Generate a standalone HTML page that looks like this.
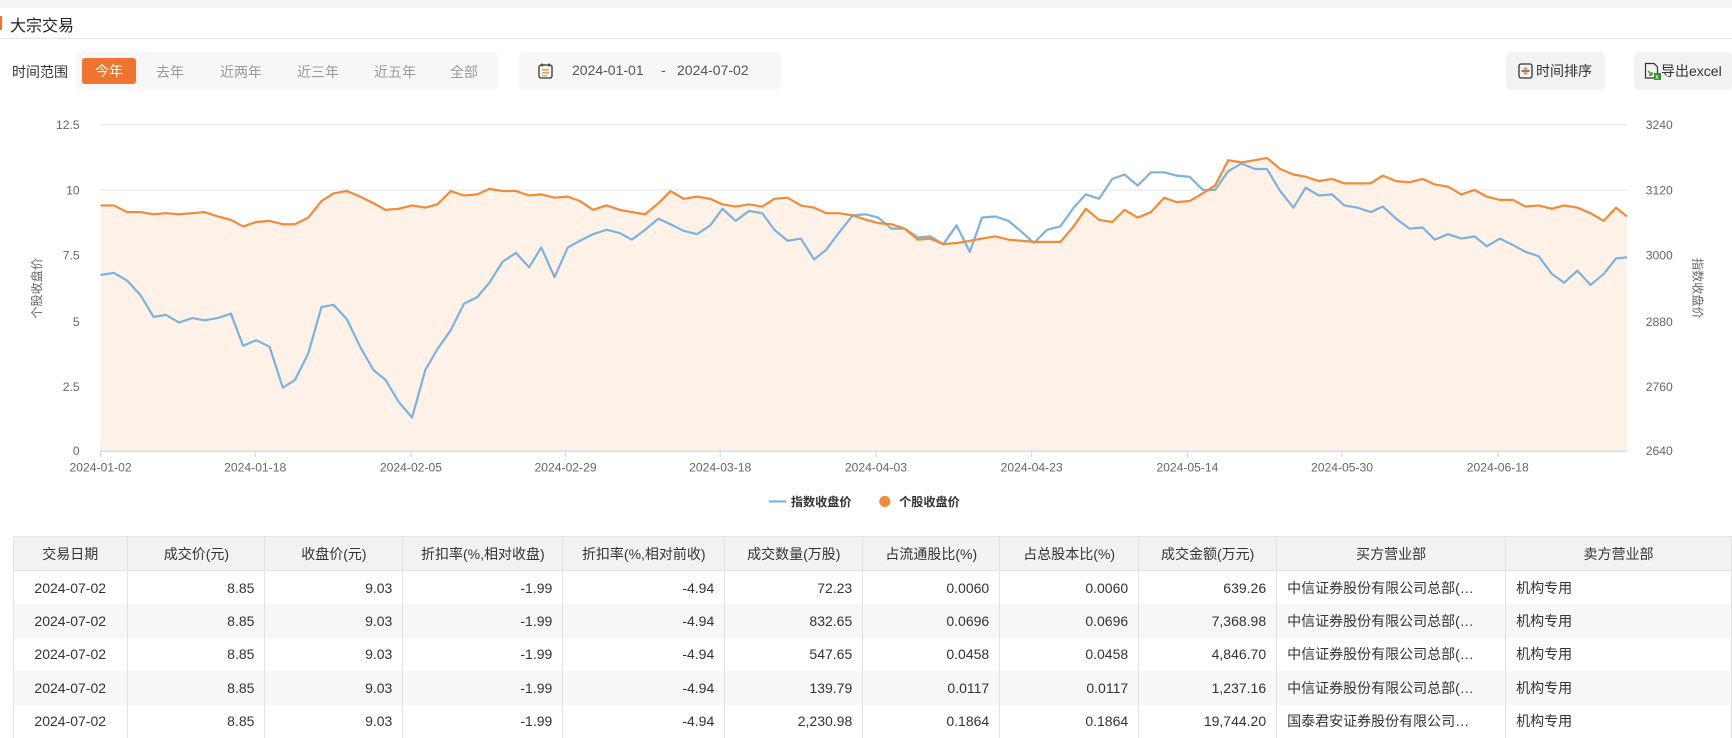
<!DOCTYPE html>
<html><head><meta charset="utf-8">
<style>
*{margin:0;padding:0;box-sizing:border-box}
body{width:1732px;height:738px;overflow:hidden;background:#fff;font-family:"Liberation Sans","Noto Sans CJK SC",sans-serif;color:#333;position:relative}
.topbg{position:absolute;left:0;top:0;width:1732px;height:8px;background:#f5f5f5}
.title{position:absolute;left:10px;top:12px;font-size:16px;color:#222}
.obar{position:absolute;left:0;top:16px;width:2px;height:14px;background:#ef7430}
.div{position:absolute;left:0;top:38px;width:1732px;height:1px;background:#e4e4e4}
.lbl{position:absolute;left:12px;top:62px;font-size:14px;color:#333}
.fbox{position:absolute;left:76px;top:52px;width:422px;height:38px;background:#f7f7f7;border-radius:5px}
.act{position:absolute;left:82px;top:58px;width:54px;height:26px;background:#ef7430;border-radius:3px;color:#fff;font-size:14px;text-align:center;line-height:26px}
.opt{position:absolute;top:62px;font-size:14px;color:#999;transform:translateX(-50%)}
.dbox{position:absolute;left:519px;top:52px;width:262px;height:38px;background:#f7f7f7;border-radius:5px}
.dt{position:absolute;top:62px;font-size:14px;color:#555}
.btn{position:absolute;top:52px;height:38px;background:#f2f2f2;border-radius:5px;font-size:14px;color:#333;line-height:38px}
svg.chart{position:absolute;left:0;top:0}
table{position:absolute;left:13px;top:536px;border-collapse:collapse;font-size:14px;color:#333;table-layout:fixed}
td,th{border-right:1px solid #e2e2e2;height:33.5px;padding:0 10px;white-space:nowrap;overflow:hidden}
th{background:#f2f2f2;font-weight:normal;text-align:center;height:34px;border-bottom:1px solid #e2e2e2;border-top:1px solid #e2e2e2}
tr.alt td{background:#f7f7f7}
td.c{text-align:center}td.r{text-align:right}td.l{text-align:left}
</style></head><body>
<div class="topbg"></div>
<div class="obar"></div>
<div class="title">大宗交易</div>
<div class="div"></div>
<div class="lbl">时间范围</div>
<div class="fbox"></div>
<div class="act">今年</div>
<div class="opt" style="left:170px">去年</div>
<div class="opt" style="left:241px">近两年</div>
<div class="opt" style="left:318px">近三年</div>
<div class="opt" style="left:395px">近五年</div>
<div class="opt" style="left:464px">全部</div>
<div class="dbox"></div>
<svg style="position:absolute;left:538px;top:63px" width="15" height="16" viewBox="0 0 15 16"><rect x="1" y="2" width="13" height="13" rx="2" fill="none" stroke="#333" stroke-width="1.3"/><line x1="4" y1="0.5" x2="4" y2="3.5" stroke="#333" stroke-width="1.3"/><line x1="11" y1="0.5" x2="11" y2="3.5" stroke="#333" stroke-width="1.3"/><rect x="4" y="6" width="7" height="1.6" fill="#f0a060"/><rect x="4" y="9" width="7" height="1.6" fill="#f0a060"/><rect x="4" y="12" width="5" height="1.4" fill="#f0a060"/></svg>
<div class="dt" style="left:572px">2024-01-01</div>
<div class="dt" style="left:661px">-</div>
<div class="dt" style="left:677px">2024-07-02</div>
<div class="btn" style="left:1506px;width:99px;padding-left:30px">时间排序</div>
<svg style="position:absolute;left:1518px;top:63px" width="15" height="16" viewBox="0 0 15 16"><rect x="1" y="1" width="13" height="14" rx="2" fill="none" stroke="#333" stroke-width="1.3"/><line x1="3.5" y1="8" x2="11.5" y2="8" stroke="#333" stroke-width="1.2"/><path d="M5 6.5 L7.5 4 L10 6.5Z" fill="#ef7430"/><path d="M5 9.5 L7.5 12 L10 9.5Z" fill="#ef7430"/></svg>
<div class="btn" style="left:1634px;width:98px;padding-left:27px">导出excel</div>
<svg style="position:absolute;left:1644px;top:62px" width="18" height="18" viewBox="0 0 18 18"><path d="M1.5 1.5 H10 L13.5 5 V16 H1.5Z" fill="none" stroke="#333" stroke-width="1.2"/><path d="M4 9 L8 13 M8 13 V10 M8 13 H5" stroke="#4a9a3a" stroke-width="1.5" fill="none"/><rect x="10" y="11" width="7" height="7" fill="#3c8f35"/><text x="11.3" y="17" font-size="7" fill="#fff" font-family="Liberation Sans">x</text></svg>

<svg class="chart" width="1732" height="520" viewBox="0 0 1568 470.8">
<g stroke="#e6e6e6" stroke-width="1">
<line x1="91" y1="113" x2="1473" y2="113"/><line x1="91" y1="172" x2="1473" y2="172"/><line x1="91" y1="231" x2="1473" y2="231"/><line x1="91" y1="291" x2="1473" y2="291"/><line x1="91" y1="350" x2="1473" y2="350"/>
</g>
<polygon fill="#fdf1e8" points="91,408 91,186 103,186 115,192 127,192 139,194 150,193 162,194 174,193 185,192 197,196 209,199 220,205 232,201 244,200 256,203 267,203 279,197 291,182 302,175 314,173 326,178 338,184 349,190 361,189 373,186 385,188 396,185 408,173 420,177 432,176 443,171 455,173 467,173 479,177 490,176 502,179 514,178 525,182 537,190 549,186 561,190 572,192 584,194 596,184 607,173 619,180 631,178 643,180 654,185 666,187 678,185 690,187 701,180 713,179 725,186 737,188 748,193 760,193 772,195 784,199 795,202 807,203 819,207 831,217 842,216 854,221 866,220 878,218 889,216 901,214 913,217 925,218 936,219 948,219 960,219 972,205 983,189 995,199 1007,201 1018,190 1030,197 1042,192 1054,179 1065,183 1077,182 1089,175 1100,168 1112,145 1124,147 1136,145 1147,143 1159,153 1171,158 1182,160 1194,164 1206,162 1217,166 1229,166 1241,166 1252,159 1264,164 1276,165 1288,162 1299,167 1311,169 1323,176 1335,172 1346,178 1358,181 1370,181 1381,187 1393,186 1405,189 1416,186 1428,188 1440,193 1452,200 1463,188 1473,196 1473,408"/>
<polyline fill="none" stroke="#7eb2dd" stroke-width="2" stroke-linejoin="round" points="91,249 103,247 115,254 127,267 139,287 150,285 162,292 174,288 185,290 197,288 209,284 220,313 232,308 244,314 256,351 267,344 279,320 291,278 302,276 314,289 326,314 338,335 349,344 361,364 373,378 385,335 396,316 408,299 420,275 432,269 443,256 455,237 467,229 479,242 490,224 502,251 514,224 525,218 537,212 549,208 561,211 572,217 584,208 596,198 607,203 619,209 631,212 643,204 654,189 666,200 678,191 690,193 701,208 713,218 725,216 737,235 748,226 760,210 772,195 784,194 795,197 807,207 819,207 831,215 842,214 854,221 866,204 878,228 889,197 901,196 913,200 925,210 936,220 948,208 960,205 972,188 983,176 995,180 1007,162 1018,158 1030,168 1042,156 1054,156 1065,159 1077,160 1089,172 1100,172 1112,155 1124,148 1136,153 1147,153 1159,173 1171,188 1182,170 1194,177 1206,176 1217,186 1229,188 1241,192 1252,187 1264,198 1276,207 1288,206 1299,217 1311,212 1323,216 1335,214 1346,223 1358,216 1370,222 1381,228 1393,232 1405,248 1416,256 1428,245 1440,258 1452,248 1463,234 1473,233"/>
<polyline fill="none" stroke="#ef8c3b" stroke-width="2" stroke-linejoin="round" points="91,186 103,186 115,192 127,192 139,194 150,193 162,194 174,193 185,192 197,196 209,199 220,205 232,201 244,200 256,203 267,203 279,197 291,182 302,175 314,173 326,178 338,184 349,190 361,189 373,186 385,188 396,185 408,173 420,177 432,176 443,171 455,173 467,173 479,177 490,176 502,179 514,178 525,182 537,190 549,186 561,190 572,192 584,194 596,184 607,173 619,180 631,178 643,180 654,185 666,187 678,185 690,187 701,180 713,179 725,186 737,188 748,193 760,193 772,195 784,199 795,202 807,203 819,207 831,217 842,216 854,221 866,220 878,218 889,216 901,214 913,217 925,218 936,219 948,219 960,219 972,205 983,189 995,199 1007,201 1018,190 1030,197 1042,192 1054,179 1065,183 1077,182 1089,175 1100,168 1112,145 1124,147 1136,145 1147,143 1159,153 1171,158 1182,160 1194,164 1206,162 1217,166 1229,166 1241,166 1252,159 1264,164 1276,165 1288,162 1299,167 1311,169 1323,176 1335,172 1346,178 1358,181 1370,181 1381,187 1393,186 1405,189 1416,186 1428,188 1440,193 1452,200 1463,188 1473,196"/>
<line x1="90" y1="408.5" x2="1473" y2="408.5" stroke="#ccd6eb" stroke-width="1"/>
<g stroke="#ccd6eb"><line x1="91" y1="408" x2="91" y2="414"/><line x1="231" y1="408" x2="231" y2="414"/><line x1="372" y1="408" x2="372" y2="414"/><line x1="512" y1="408" x2="512" y2="414"/><line x1="652" y1="408" x2="652" y2="414"/><line x1="793" y1="408" x2="793" y2="414"/><line x1="934" y1="408" x2="934" y2="414"/><line x1="1075" y1="408" x2="1075" y2="414"/><line x1="1215" y1="408" x2="1215" y2="414"/><line x1="1356" y1="408" x2="1356" y2="414"/></g>
<g font-family="Liberation Sans, sans-serif" font-size="11" fill="#666">
<g text-anchor="end"><text x="72" y="117">12.5</text><text x="72" y="176">10</text><text x="72" y="235">7.5</text><text x="72" y="295">5</text><text x="72" y="354">2.5</text><text x="72" y="412">0</text></g>
<g text-anchor="start"><text x="1490" y="117">3240</text><text x="1490" y="176">3120</text><text x="1490" y="235">3000</text><text x="1490" y="295">2880</text><text x="1490" y="354">2760</text><text x="1490" y="412">2640</text></g>
<g text-anchor="middle"><text x="91" y="427">2024-01-02</text><text x="231" y="427">2024-01-18</text><text x="372" y="427">2024-02-05</text><text x="512" y="427">2024-02-29</text><text x="652" y="427">2024-03-18</text><text x="793" y="427">2024-04-03</text><text x="934" y="427">2024-04-23</text><text x="1075" y="427">2024-05-14</text><text x="1215" y="427">2024-05-30</text><text x="1356" y="427">2024-06-18</text></g>
<text transform="translate(37,261) rotate(-90)" text-anchor="middle" font-family="Liberation Sans, Noto Sans CJK SC, sans-serif">个股收盘价</text>
<text transform="translate(1533,261) rotate(90)" text-anchor="middle" font-family="Liberation Sans, Noto Sans CJK SC, sans-serif">指数收盘价</text>
</g>
<line x1="696" y1="454" x2="712" y2="454" stroke="#7eb2dd" stroke-width="2"/>
<circle cx="801" cy="454" r="5" fill="#ef8c3b"/>
<g font-family="Liberation Sans, Noto Sans CJK SC, sans-serif" font-size="11" fill="#333" font-weight="bold"><text x="716" y="458">指数收盘价</text><text x="814" y="458">个股收盘价</text></g>
</svg>

<table>
<colgroup><col style="width:115px"><col style="width:137px"><col style="width:138px"><col style="width:160px"><col style="width:162px"><col style="width:138px"><col style="width:137px"><col style="width:139px"><col style="width:138px"><col style="width:229px"><col style="width:226px"></colgroup>
<tr><th>交易日期</th><th>成交价(元)</th><th>收盘价(元)</th><th>折扣率(%,相对收盘)</th><th>折扣率(%,相对前收)</th><th>成交数量(万股)</th><th>占流通股比(%)</th><th>占总股本比(%)</th><th>成交金额(万元)</th><th>买方营业部</th><th>卖方营业部</th></tr>
<tr><td class="c">2024-07-02</td><td class="r">8.85</td><td class="r">9.03</td><td class="r">-1.99</td><td class="r">-4.94</td><td class="r">72.23</td><td class="r">0.0060</td><td class="r">0.0060</td><td class="r">639.26</td><td class="l">中信证券股份有限公司总部(…</td><td class="l">机构专用</td></tr>
<tr class="alt"><td class="c">2024-07-02</td><td class="r">8.85</td><td class="r">9.03</td><td class="r">-1.99</td><td class="r">-4.94</td><td class="r">832.65</td><td class="r">0.0696</td><td class="r">0.0696</td><td class="r">7,368.98</td><td class="l">中信证券股份有限公司总部(…</td><td class="l">机构专用</td></tr>
<tr><td class="c">2024-07-02</td><td class="r">8.85</td><td class="r">9.03</td><td class="r">-1.99</td><td class="r">-4.94</td><td class="r">547.65</td><td class="r">0.0458</td><td class="r">0.0458</td><td class="r">4,846.70</td><td class="l">中信证券股份有限公司总部(…</td><td class="l">机构专用</td></tr>
<tr class="alt"><td class="c">2024-07-02</td><td class="r">8.85</td><td class="r">9.03</td><td class="r">-1.99</td><td class="r">-4.94</td><td class="r">139.79</td><td class="r">0.0117</td><td class="r">0.0117</td><td class="r">1,237.16</td><td class="l">中信证券股份有限公司总部(…</td><td class="l">机构专用</td></tr>
<tr><td class="c">2024-07-02</td><td class="r">8.85</td><td class="r">9.03</td><td class="r">-1.99</td><td class="r">-4.94</td><td class="r">2,230.98</td><td class="r">0.1864</td><td class="r">0.1864</td><td class="r">19,744.20</td><td class="l">国泰君安证券股份有限公司…</td><td class="l">机构专用</td></tr>
</table>
<div style="position:absolute;left:13px;top:536px;width:1px;height:202px;background:#e2e2e2"></div>
</body></html>
